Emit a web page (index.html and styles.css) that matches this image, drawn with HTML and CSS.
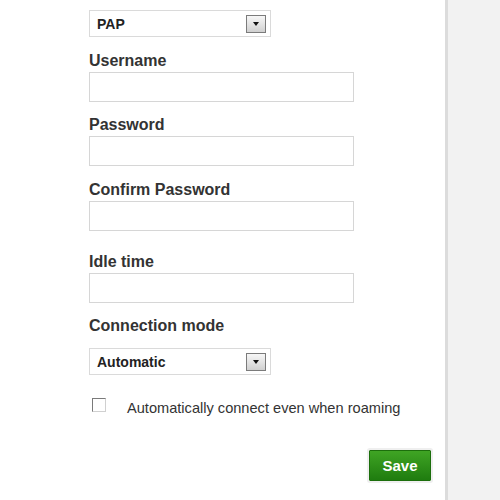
FILE: index.html
```html
<!DOCTYPE html>
<html>
<head>
<meta charset="utf-8">
<link rel="stylesheet" href="styles.css">
</head>
<body>
<div class="page">
  <main class="main">
    <div class="select select-first">
      <span class="select-value">PAP</span>
      <span class="select-btn"><span class="tri"></span></span>
    </div>

    <label class="label label-first">Username</label>
    <div class="input"></div>

    <label class="label">Password</label>
    <div class="input"></div>

    <label class="label label-confirm">Confirm Password</label>
    <div class="input"></div>

    <label class="label label-idle">Idle time</label>
    <div class="input"></div>

    <label class="label">Connection mode</label>
    <div class="select select-mode">
      <span class="select-value">Automatic</span>
      <span class="select-btn"><span class="tri"></span></span>
    </div>

    <div class="check-row">
      <span class="checkbox"></span>
      <span class="check-text">Automatically connect even when roaming</span>
    </div>

    <div class="actions">
      <button class="save">Save</button>
    </div>
  </main>
  <div class="divider"></div>
  <aside class="side"></aside>
</div>
</body>
</html>
```

FILE: styles.css
```css
html, body {
  margin: 0;
  padding: 0;
  background: #ffffff;
  font-family: "Liberation Sans", Arial, sans-serif;
  color: #333333;
}

.page {
  display: flex;
  width: 500px;
  height: 500px;
  overflow: hidden;
}

.main {
  width: 445px;
  flex: none;
  display: flex;
  flex-direction: column;
  align-items: flex-start;
  padding: 10px 0 0 89px;
  box-sizing: border-box;
  background: #ffffff;
}

.divider {
  width: 3px;
  flex: none;
  background: #dcdcdc;
}

.side {
  flex: 1;
  background: #f2f2f2;
}

.select {
  width: 182px;
  height: 27px;
  box-sizing: border-box;
  border: 1px solid #dadada;
  display: flex;
  align-items: center;
  justify-content: space-between;
  padding: 0 4px 0 7px;
  background: #ffffff;
}

.select-value {
  font-size: 14px;
  font-weight: bold;
  color: #222222;
  line-height: 16px;
  padding-top: 1px;
}

.select-btn {
  width: 20px;
  height: 18px;
  box-sizing: border-box;
  border: 1px solid #7b7b7b;
  background: linear-gradient(#f7f7f7, #d0d0d0);
  display: flex;
  align-items: center;
  justify-content: center;
}

.tri {
  width: 0;
  height: 0;
  border-left: 3px solid transparent;
  border-right: 3px solid transparent;
  border-top: 4px solid #111111;
  margin-top: 1px;
}

.label {
  display: block;
  font-size: 16px;
  line-height: 18px;
  font-weight: bold;
  color: #333333;
  margin-top: 14px;
  margin-bottom: 2px;
}

.label-first {
  margin-top: 15px;
}

.label-confirm {
  margin-top: 15px;
}

.label-idle {
  margin-top: 22px;
}

.input {
  width: 265px;
  height: 30px;
  box-sizing: border-box;
  border: 1px solid #d6d6d6;
  background: #ffffff;
}

.select-mode {
  margin-top: 11px;
}

.check-row {
  display: flex;
  align-items: flex-start;
  margin-top: 24px;
  height: 18px;
}

.checkbox {
  width: 14px;
  height: 14px;
  box-sizing: border-box;
  margin-left: 3px;
  margin-top: -1px;
  border-top: 1px solid #7a7a7a;
  border-left: 1px solid #7a7a7a;
  border-right: 1px solid #d0d0d0;
  border-bottom: 1px solid #d0d0d0;
  background: #ffffff;
}

.check-text {
  margin-left: 21px;
  font-size: 14.6px;
  line-height: 18px;
  color: #333333;
}

.actions {
  align-self: stretch;
  display: flex;
  justify-content: flex-end;
  margin-top: 33px;
  padding-right: 14px;
}

.save {
  width: 62px;
  height: 31px;
  border: 1px solid #1c6e0c;
  border-radius: 1px;
  background: linear-gradient(#3fa424, #1f7c0f);
  color: #ffffff;
  font-family: "Liberation Sans", Arial, sans-serif;
  font-size: 15px;
  font-weight: bold;
  padding: 0;
  box-shadow: 0 0 0 2px #efefef;
}
```
